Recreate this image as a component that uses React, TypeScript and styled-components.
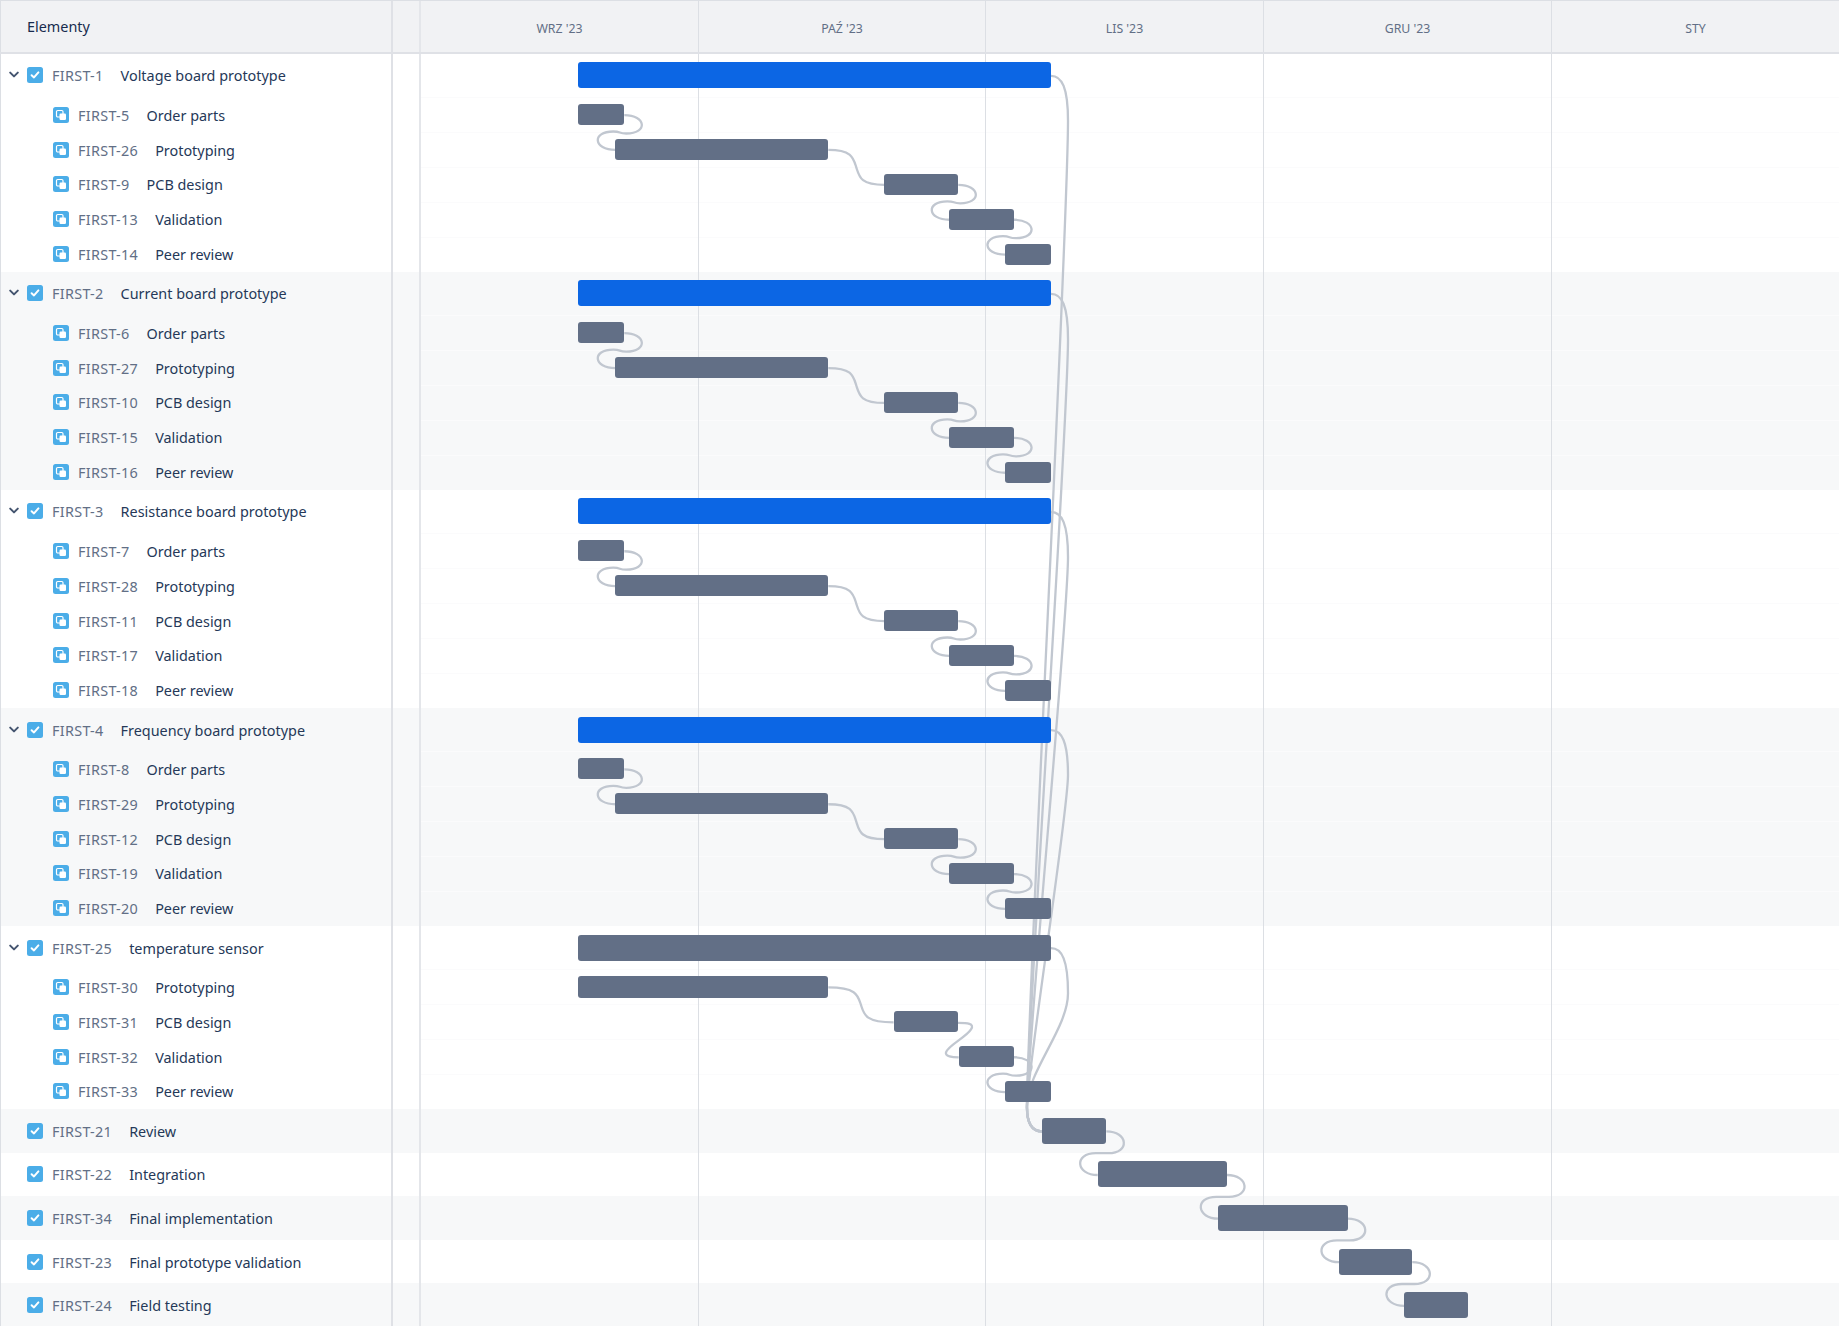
import * as React from "react";
import styled, { createGlobalStyle } from "styled-components";

const PARENT_ROW = 43.6;
const CHILD_ROW = 34.9;
const HEADER_BOTTOM = 53.6;
const TIMELINE_LEFT = 421;
const TIMELINE_WIDTH = 1418;

const GlobalStyle = createGlobalStyle`
  html, body {
    margin: 0;
    height: 100%;
    overflow: hidden;
    background: #fff;
  }
  body {
    font-family: "Noto Sans", "Open Sans", sans-serif;
    font-size: 14.4px;
    color: #172b4d;
  }
`;

const Page = styled.div`
  position: relative;
  height: 100vh;
  overflow: hidden;
  box-sizing: border-box;
  border-top: 1px solid #dcdfe4;
`;

const Header = styled.div`
  display: flex;
  height: 52.6px;
  box-sizing: border-box;
  background: #f1f2f4;
  border-bottom: 2px solid #dfe1e6;
`;

const ListHeading = styled.div`
  width: 393px;
  flex: none;
  box-sizing: border-box;
  display: flex;
  align-items: center;
  padding-left: 26px;
  border-left: 1px solid #dcdfe4;
  border-right: 2px solid #dfe1e6;
  font-size: 14.4px;
  color: #172b4d;
`;

const Gutter = styled.div`
  width: 28px;
  flex: none;
  box-sizing: border-box;
  border-right: 2px solid #e4e6ea;
`;

const Month = styled.div<{ $width: number; $last?: boolean }>`
  width: ${(p) => p.$width}px;
  flex: none;
  box-sizing: border-box;
  display: flex;
  align-items: center;
  justify-content: center;
  padding-top: 5px;
  font-size: 12.3px;
  color: #626f86;
  border-right: ${(p) => (p.$last ? "none" : "1px solid #dcdfe4")};
`;

const Body = styled.div`
  position: relative;
`;

const Gridlines = styled.div`
  position: absolute;
  top: 0;
  bottom: 0;
  left: ${TIMELINE_LEFT}px;
  display: flex;
  z-index: 0;
`;

const GridColumn = styled.div<{ $width: number; $last?: boolean }>`
  width: ${(p) => p.$width}px;
  height: 1280px;
  box-sizing: border-box;
  border-right: ${(p) => (p.$last ? "none" : "1px solid #dcdfe4")};
`;

const Links = styled.svg`
  position: absolute;
  top: 0;
  left: ${TIMELINE_LEFT}px;
  z-index: 1;
  pointer-events: none;
`;

const Link = styled.path`
  fill: none;
  stroke: #c1c7d0;
  stroke-width: 2.3;
`;

const Row = styled.div<{ $height: number; $alt: boolean }>`
  display: flex;
  height: ${(p) => p.$height}px;
  background: ${(p) => (p.$alt ? "#f7f8f9" : "#fff")};
`;

const ListCell = styled.div<{ $child: boolean }>`
  width: 393px;
  flex: none;
  box-sizing: border-box;
  display: flex;
  align-items: center;
  padding-left: ${(p) => (p.$child ? "52px" : "8px")};
  border-left: 1px solid #dcdfe4;
  border-right: 2px solid #dfe1e6;
`;

const TimelineCell = styled.div<{ $child: boolean }>`
  flex: 1;
  min-width: 0;
  box-sizing: border-box;
  display: flex;
  align-items: center;
  box-shadow: ${(p) => (p.$child ? "inset 0 1px 0 #fbfbfc" : "none")};
`;

const Toggle = styled.span<{ $visible: boolean }>`
  width: 10px;
  height: 8px;
  flex: none;
  margin-right: 8px;
  display: flex;
  visibility: ${(p) => (p.$visible ? "visible" : "hidden")};
`;

const IconBox = styled.svg`
  width: 16px;
  height: 16px;
  flex: none;
  margin-right: 9px;
`;

const IssueKey = styled.span`
  color: #626f86;
  margin-right: 17px;
  margin-top: 1px;
  letter-spacing: 0.3px;
  white-space: nowrap;
`;

const IssueTitle = styled.span`
  color: #253858;
  margin-top: 1px;
  white-space: nowrap;
`;

const Bar = styled.div<{ $left: number; $width: number; $tall: boolean; $blue: boolean }>`
  position: relative;
  z-index: 2;
  margin-left: ${(p) => p.$left}px;
  width: ${(p) => p.$width}px;
  height: ${(p) => (p.$tall ? 26 : 21.4)}px;
  border-radius: 3px;
  background: ${(p) => (p.$blue ? "#0c66e4" : "#626f86")};
`;

const months = [
  { label: "WRZ '23", width: 278 },
  { label: "PAŹ '23", width: 287 },
  { label: "LIS '23", width: 278 },
  { label: "GRU '23", width: 288 },
  { label: "STY", width: 287 },
];

interface IRow {
  id: string;
  title: string;
  kind: "parent" | "child" | "single";
  start: number;
  end: number;
  alt: boolean;
  blue?: boolean;
}

const stages: [string, number, number][] = [
  ["Order parts", 578, 624.3],
  ["Prototyping", 615.3, 828.3],
  ["PCB design", 884.3, 958.3],
  ["Validation", 949.3, 1014],
  ["Peer review", 1005, 1051],
];

const boards: [string, string, number[], boolean][] = [
  ["FIRST-1", "Voltage board prototype", [5, 26, 9, 13, 14], false],
  ["FIRST-2", "Current board prototype", [6, 27, 10, 15, 16], true],
  ["FIRST-3", "Resistance board prototype", [7, 28, 11, 17, 18], false],
  ["FIRST-4", "Frequency board prototype", [8, 29, 12, 19, 20], true],
];

const rows: IRow[] = [];
boards.forEach(([id, title, children, alt]) => {
  rows.push({ id, title, kind: "parent", start: 578, end: 1051, alt, blue: true });
  children.forEach((n, i) => {
    const [name, start, end] = stages[i];
    rows.push({ id: `FIRST-${n}`, title: name, kind: "child", start, end, alt });
  });
});
rows.push({ id: "FIRST-25", title: "temperature sensor", kind: "parent", start: 578, end: 1051, alt: false });
rows.push({ id: "FIRST-30", title: "Prototyping", kind: "child", start: 578, end: 828.3, alt: false });
rows.push({ id: "FIRST-31", title: "PCB design", kind: "child", start: 893.6, end: 958, alt: false });
rows.push({ id: "FIRST-32", title: "Validation", kind: "child", start: 958.7, end: 1014, alt: false });
rows.push({ id: "FIRST-33", title: "Peer review", kind: "child", start: 1005, end: 1051, alt: false });
rows.push({ id: "FIRST-21", title: "Review", kind: "single", start: 1042, end: 1106.3, alt: true });
rows.push({ id: "FIRST-22", title: "Integration", kind: "single", start: 1097.7, end: 1227, alt: false });
rows.push({ id: "FIRST-34", title: "Final implementation", kind: "single", start: 1218.3, end: 1347.7, alt: true });
rows.push({ id: "FIRST-23", title: "Final prototype validation", kind: "single", start: 1339, end: 1412.3, alt: false });
rows.push({ id: "FIRST-24", title: "Field testing", kind: "single", start: 1404, end: 1468, alt: true });

const rowHeight = (r: IRow) => (r.kind === "child" ? CHILD_ROW : PARENT_ROW);

const centers: Record<string, number> = {};
let cursor = HEADER_BOTTOM;
rows.forEach((r) => {
  centers[r.id] = cursor + rowHeight(r) / 2;
  cursor += rowHeight(r);
});

const byId = (id: string) => rows.find((r) => r.id === id) as IRow;

// bar end to next bar start, looping back when the next bar overlaps
const linkPath = (from: string, to: string) => {
  const a = byId(from);
  const b = byId(to);
  const x1 = a.end;
  const x2 = b.start;
  const y1 = centers[from];
  const y2 = centers[to];
  const mid = (y1 + y2) / 2;
  if (x2 > x1 + 20) {
    const xm = (x1 + x2) / 2;
    return `M${x1} ${y1}C${xm - 4} ${y1} ${xm - 3} ${y1 + 8} ${xm} ${mid}C${xm + 3} ${y2 - 8} ${xm + 4} ${y2} ${x2} ${y2}`;
  }
  const w = y2 - y1 < 40 ? 1 : 0;
  return (
    `M${x1} ${y1}C${x1 + 22} ${y1} ${x1 + 24} ${mid + w} ${x1 + 2} ${mid + w}` +
    `C${x1 - 6} ${mid + w} ${x2 + 6} ${mid - w} ${x2 - 2} ${mid - w}` +
    `C${x2 - 24} ${mid - w} ${x2 - 22} ${y2} ${x2} ${y2}`
  );
};

// parent bars all run down to the Review bar
const reviewPath = (from: string) => {
  const y1 = centers[from];
  const y2 = centers["FIRST-21"];
  const top = y1 + 45;
  const bottom = y2 - 26;
  const k = Math.max((bottom - top) * 0.12, 35);
  return (
    `M1051 ${y1}C1062 ${y1} 1068 ${y1 + 12} 1068 ${top}` +
    `C1068 ${top + k} 1028 ${bottom - k} 1027 ${bottom}` +
    `C1026.5 ${y2 - 8} 1032 ${y2} 1042 ${y2}`
  );
};

const links: string[] = [
  ...[
    ["FIRST-5", "FIRST-26"], ["FIRST-26", "FIRST-9"], ["FIRST-9", "FIRST-13"], ["FIRST-13", "FIRST-14"],
    ["FIRST-6", "FIRST-27"], ["FIRST-27", "FIRST-10"], ["FIRST-10", "FIRST-15"], ["FIRST-15", "FIRST-16"],
    ["FIRST-7", "FIRST-28"], ["FIRST-28", "FIRST-11"], ["FIRST-11", "FIRST-17"], ["FIRST-17", "FIRST-18"],
    ["FIRST-8", "FIRST-29"], ["FIRST-29", "FIRST-12"], ["FIRST-12", "FIRST-19"], ["FIRST-19", "FIRST-20"],
    ["FIRST-30", "FIRST-31"], ["FIRST-32", "FIRST-33"],
    ["FIRST-21", "FIRST-22"], ["FIRST-22", "FIRST-34"], ["FIRST-34", "FIRST-23"], ["FIRST-23", "FIRST-24"],
  ].map(([a, b]) => linkPath(a, b)),
  "M958 1022.5C967 1022.5 975 1023 971 1029C966 1037 948 1045 946 1052C945 1056 952 1057 958.7 1057",
  ...["FIRST-1", "FIRST-2", "FIRST-3", "FIRST-4", "FIRST-25"].map(reviewPath),
];

const TaskIcon = () => (
  <IconBox viewBox="0 0 16 16">
    <rect width="16" height="16" rx="2.5" fill="#4bade8" />
    <path d="M4.6 8.2 7 10.4 11.4 5.4" fill="none" stroke="#fff" strokeWidth="2" strokeLinecap="round" strokeLinejoin="round" />
  </IconBox>
);

const SubtaskIcon = () => (
  <IconBox viewBox="0 0 16 16">
    <rect width="16" height="16" rx="2.5" fill="#4bade8" />
    <rect x="3.5" y="3.5" width="6.5" height="6.5" rx="1.2" fill="none" stroke="#fff" strokeWidth="1.2" />
    <rect x="6.5" y="6.5" width="6.5" height="6.5" rx="1.2" fill="#fff" />
  </IconBox>
);

const Chevron = () => (
  <svg viewBox="0 0 10 8" width="10" height="8">
    <path d="M1.2 1.6 5 5.4 8.8 1.6" fill="none" stroke="#44546f" strokeWidth="2" strokeLinecap="round" strokeLinejoin="round" />
  </svg>
);

export default function App() {
  return (
    <Page>
      <GlobalStyle />
      <Header>
        <ListHeading>Elementy</ListHeading>
        <Gutter />
        {months.map((m, i) => (
          <Month key={m.label} $width={m.width} $last={i === months.length - 1}>
            {m.label}
          </Month>
        ))}
      </Header>
      <Body>
        <Gridlines>
          {months.map((m, i) => (
            <GridColumn key={m.label} $width={m.width} $last={i === months.length - 1} />
          ))}
        </Gridlines>
        <Links
          width={TIMELINE_WIDTH}
          height={1273}
          viewBox={`${TIMELINE_LEFT} ${HEADER_BOTTOM} ${TIMELINE_WIDTH} 1273`}
        >
          {links.map((d, i) => (
            <Link key={i} d={d} />
          ))}
        </Links>
        {rows.map((r) => {
          const isChild = r.kind === "child";
          return (
            <Row key={r.id} $height={rowHeight(r)} $alt={r.alt}>
              <ListCell $child={isChild}>
                {!isChild && (
                  <Toggle $visible={r.kind === "parent"}>
                    <Chevron />
                  </Toggle>
                )}
                {isChild ? <SubtaskIcon /> : <TaskIcon />}
                <IssueKey>{r.id}</IssueKey>
                <IssueTitle>{r.title}</IssueTitle>
              </ListCell>
              <Gutter />
              <TimelineCell $child={isChild}>
                <Bar
                  $left={r.start - TIMELINE_LEFT}
                  $width={r.end - r.start}
                  $tall={!isChild}
                  $blue={!!r.blue}
                />
              </TimelineCell>
            </Row>
          );
        })}
      </Body>
    </Page>
  );
}
